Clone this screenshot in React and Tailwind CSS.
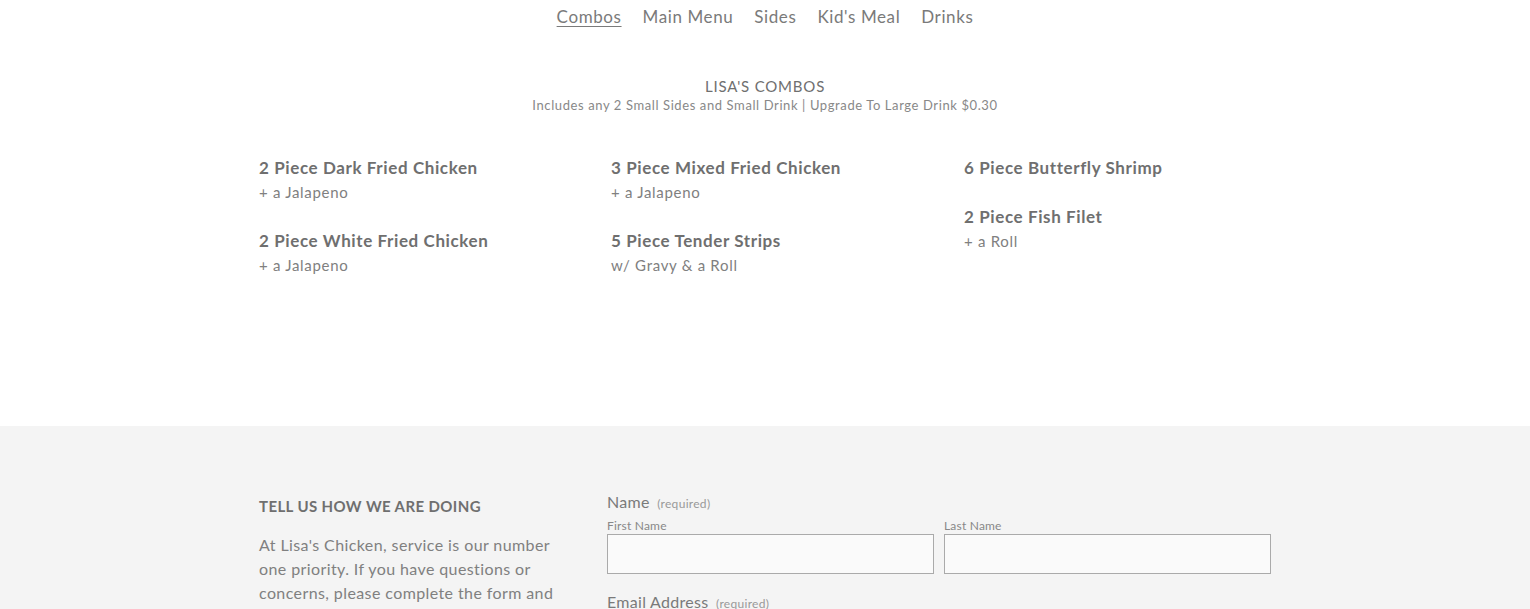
import React from "react";

const navItems = ["Combos", "Main Menu", "Sides", "Kid's Meal", "Drinks"];

const columns = [
  [
    { title: "2 Piece Dark Fried Chicken", sub: "+ a Jalapeno" },
    { title: "2 Piece White Fried Chicken", sub: "+ a Jalapeno" },
  ],
  [
    { title: "3 Piece Mixed Fried Chicken", sub: "+ a Jalapeno" },
    { title: "5 Piece Tender Strips", sub: "w/ Gravy & a Roll" },
  ],
  [
    { title: "6 Piece Butterfly Shrimp" },
    { title: "2 Piece Fish Filet", sub: "+ a Roll" },
  ],
];

function MenuItem({ title, sub }) {
  return (
    <div className="mb-[24px]">
      <h3 className="text-[17px] leading-[25px] font-bold text-[#6f6f6f] tracking-[0.6px]">
        {title}
      </h3>
      {sub && (
        <p className="text-[15px] leading-[24px] text-[#808080] tracking-[0.7px]">
          {sub}
        </p>
      )}
    </div>
  );
}

export default function App() {
  return (
    <div
      className="min-h-screen bg-white"
      style={{ fontFamily: "Lato, 'Open Sans', sans-serif" }}
    >
      <nav className="flex justify-center gap-[21px] pt-[6px] text-[17px] leading-[22px] text-[#7a7a7a] tracking-[0.6px]">
        {navItems.map((item, i) => (
          <a
            key={item}
            href="#"
            className={i === 0 ? "underline underline-offset-[3px]" : ""}
          >
            {item}
          </a>
        ))}
      </nav>

      <section className="pt-[48px] text-center">
        <h2 className="text-[15px] leading-[20px] tracking-[0.8px] text-[#6f6f6f]">
          LISA'S COMBOS
        </h2>
        <p className="text-[13px] leading-[18px] text-[#888] tracking-[0.6px]">
          Includes any 2 Small Sides and Small Drink | Upgrade To Large Drink $0.30
        </p>
      </section>

      <section className="mx-auto w-[1012px] pt-[41px] pb-[125px] grid grid-cols-[352px_353px_1fr]">
        {columns.map((col, i) => (
          <div key={i}>
            {col.map((it) => (
              <MenuItem key={it.title} {...it} />
            ))}
          </div>
        ))}
      </section>

      <footer className="bg-[#f4f4f4] pt-[66px] pb-[20px]">
        <div className="mx-auto w-[1012px] flex gap-[43px]">
          <div className="w-[305px] shrink-0">
            <h4 className="text-[15px] leading-[20px] font-bold text-[#6f6f6f] tracking-[0.4px] mt-[4px]">
              TELL US HOW WE ARE DOING
            </h4>
            <p className="mt-[17px] text-[16px] leading-[24px] text-[#808080] tracking-[0.4px]">
              At Lisa's Chicken, service is our number one priority. If you have
              questions or concerns, please complete the form and we will get
              back to you as soon as possible.
            </p>
          </div>
          <form className="flex-1">
            <div className="text-[16px] leading-[20px] text-[#7a7a7a] tracking-[0.3px]">
              Name{" "}
              <span className="ml-[3px] text-[12px] text-[#999]">(required)</span>
            </div>
            <div className="mt-[4px] flex gap-[10px]">
              <label className="flex-1">
                <span className="block text-[12px] leading-[16px] text-[#888] tracking-[0.2px]">
                  First Name
                </span>
                <input className="block w-full h-[40px] border border-[#aaa] bg-[#fafafa]" />
              </label>
              <label className="flex-1">
                <span className="block text-[12px] leading-[16px] text-[#888] tracking-[0.2px]">
                  Last Name
                </span>
                <input className="block w-full h-[40px] border border-[#aaa] bg-[#fafafa]" />
              </label>
            </div>
            <div className="mt-[18px] text-[16px] leading-[20px] text-[#7a7a7a] tracking-[0.3px]">
              Email Address{" "}
              <span className="ml-[3px] text-[12px] text-[#999]">(required)</span>
            </div>
            <input className="mt-[20px] block w-full h-[40px] border border-[#aaa] bg-[#fafafa]" />
          </form>
        </div>
      </footer>
    </div>
  );
}
